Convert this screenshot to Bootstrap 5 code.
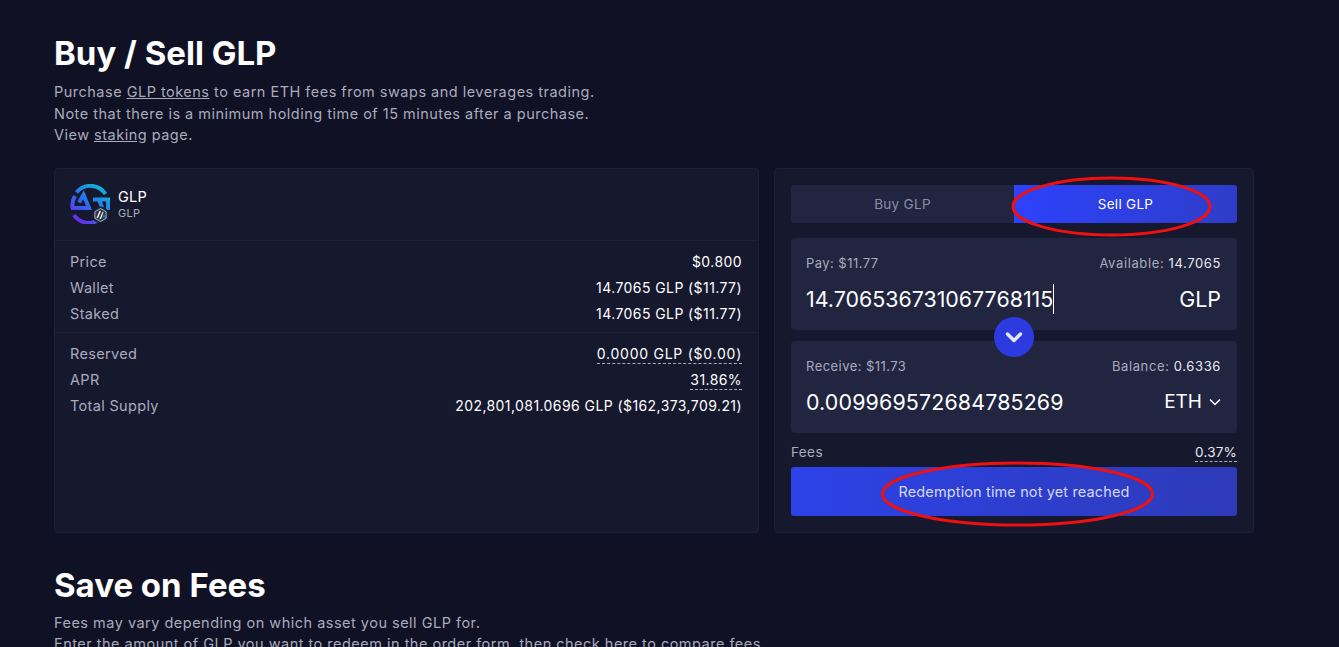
<!DOCTYPE html>
<html lang="en">
<head>
<meta charset="UTF-8" />
<title>Buy / Sell GLP</title>
<link rel="stylesheet" href="https://cdn.jsdelivr.net/npm/bootstrap@5.3.0/dist/css/bootstrap.min.css" />
<style>
html, body { height: 647px; overflow: hidden; }
body { background: #101124; color: #fff; font-family: Inter, "Liberation Sans", sans-serif; font-size: 15px; }
.glp-page { width: 1200px; margin-left: 54px; padding-top: 35px; }
.glp-title { font-size: 33px; font-weight: 700; line-height: 37px; margin: 0 0 9px; }
.glp-sub { font-size: 14.5px; line-height: 21.5px; letter-spacing: .49px; margin: 0; color: #a9abbd; }
.glp-sub a { color: #a9abbd; }
.glp-panels { display: grid; grid-template-columns: 705px 480px; gap: 15px; margin-top: 22px; height: 364px; }
.glp-panel { background: #16182e; border: 1px solid #1e2136; border-radius: 4px; }
.glp-head { height: 72px; padding: 16px 15px; border-bottom: 1px solid #1e2136; }
.glp-name { font-size: 14.5px; line-height: 18px; letter-spacing: .3px; }
.glp-sym { font-size: 11px; line-height: 14px; letter-spacing: .3px; color: #a9abbd; }
.glp-rows { padding: 8px 16px 5px 15px; }
.glp-rows + .glp-rows { padding-top: 8px; border-top: 1px solid #1e2136; }
.glp-row { height: 26px; line-height: 26px; font-size: 14px; letter-spacing: .42px; }
.glp-label { color: #a9abbd; font-size: 14.5px; letter-spacing: .33px; }
.glp-dash { border-bottom: 1px dashed #a9abbd; line-height: 18px; height: 19px; margin-top: 4px; align-self: flex-start; }
.glp-wide { letter-spacing: .75px; }
.glp-tabs { height: 38px; background: #212540; border-radius: 3px; overflow: hidden; font-size: 13.5px; letter-spacing: .3px; }
.glp-tab { flex: 1; color: #8b8da4; padding-top: 1px; }
.glp-tab-on { background: linear-gradient(90deg, #2d42fc, #2e3dc8); color: #fff; }
.glp-box { background: #212540; border-radius: 4px; height: 92px; padding: 16px 16px 15px 15px; }
.glp-box-first { margin-top: 15px; }
.glp-box-top { font-size: 13px; line-height: 18px; letter-spacing: .45px; color: #a9abbd; }
.glp-box-top span:last-child { letter-spacing: .62px; }
.glp-box-top b { font-weight: 400; color: #e8e9f0; }
.glp-box-val { font-size: 21.4px; line-height: 30px; margin-top: 12px; }
.glp-val-wide { letter-spacing: .15px; }
.glp-caret { border-right: 1px solid #fff; }
.glp-unit { font-size: 19px; gap: 7px; }
.glp-gap { height: 11px; }
.glp-swap { width: 40px; height: 40px; border-radius: 50%; background: #2b3be0; position: absolute; left: 203px; top: -13px; z-index: 2; }
.glp-fees { font-size: 13.5px; letter-spacing: .4px; color: #a9abbd; height: 20px; margin-top: 10px; }
.glp-fees span { line-height: 18px; }
.glp-fees .glp-dash { color: #e8e9f0; margin-top: 0; letter-spacing: .2px; }
.glp-btn { height: 49px; padding-top: 3px; background: linear-gradient(90deg, #2d42e8, #2d3bb8); border: 0; border-radius: 3px; color: #d5d8f5; font-size: 14.5px; letter-spacing: .13px; }
.glp-marks { position: absolute; left: -1px; top: -1px; width: 480px; height: 364px; pointer-events: none; z-index: 3; }
.glp-next { margin-top: 35px; }
.glp-next .glp-title { margin-bottom: 8px; }
</style>
</head>
<body>

<div class="glp-page">
    <h1 class="glp-title">Buy / Sell GLP</h1>
    <p class="glp-sub">Purchase <a href="#">GLP tokens</a> to earn ETH fees from swaps and leverages trading.<br />
    Note that there is a minimum holding time of 15 minutes after a purchase.<br />
    View <a href="#">staking</a> page.</p>

    <div class="glp-panels">
        <div class="glp-panel">
            <div class="glp-head d-flex align-items-center gap-2">
                <svg width="40" height="40" viewBox="0 0 40 40">
                    <defs>
                        <linearGradient id="glpGrad" gradientUnits="userSpaceOnUse" x1="34" y1="3" x2="8" y2="38">
                            <stop offset="0" stop-color="#0fb8d6" />
                            <stop offset="0.55" stop-color="#2a6cf0" />
                            <stop offset="1" stop-color="#6a2cf0" />
                        </linearGradient>
                    </defs>
                    <g fill="none" stroke="url(#glpGrad)" stroke-width="4">
                        <path d="M6.500 8.500A18 18 0 0 1 35.500 10" />
                        <path d="M4 31A18 18 0 0 0 27 37" />
                        <path d="M2.500 24A18 18 0 0 1 5 12" />
                        <path d="M1 24H19L13.500 11 9 18.500" />
                        <path d="M23 15.500H38V26M29 15.500L33 26" />
                    </g>
                    <circle cx="30.500" cy="31" r="8.500" fill="#1b2238" />
                    <path d="M30.500 24.500l5.600 3.200v6.600l-5.600 3.200-5.600-3.200v-6.600z" fill="#2c374b" stroke="#a8b4c4" stroke-width="1" />
                    <path d="M26.500 34l3-7h1.500l-3 7zM29.500 35l3-7h1l-2.500 7z" fill="#fff" />
                    <path d="M33 33l1-2.500 1 3z" fill="#28a0f0" />
                </svg>
                <div>
                    <div class="glp-name">GLP</div>
                    <div class="glp-sym">GLP</div>
                </div>
            </div>
            <div class="glp-rows">
                <div class="glp-row d-flex justify-content-between"><span class="glp-label">Price</span><span>$0.800</span></div>
                <div class="glp-row d-flex justify-content-between"><span class="glp-label">Wallet</span><span>14.7065 GLP ($11.77)</span></div>
                <div class="glp-row d-flex justify-content-between"><span class="glp-label">Staked</span><span>14.7065 GLP ($11.77)</span></div>
            </div>
            <div class="glp-rows">
                <div class="glp-row d-flex justify-content-between"><span class="glp-label">Reserved</span><span class="glp-dash glp-wide">0.0000 GLP ($0.00)</span></div>
                <div class="glp-row d-flex justify-content-between"><span class="glp-label">APR</span><span class="glp-dash">31.86%</span></div>
                <div class="glp-row d-flex justify-content-between"><span class="glp-label">Total Supply</span><span>202,801,081.0696 GLP ($162,373,709.21)</span></div>
            </div>
        </div>

        <div class="glp-panel position-relative p-3">
            <div class="glp-tabs d-flex">
                <div class="glp-tab d-flex align-items-center justify-content-center">Buy GLP</div>
                <div class="glp-tab glp-tab-on d-flex align-items-center justify-content-center">Sell GLP</div>
            </div>
            <div class="glp-box glp-box-first">
                <div class="glp-box-top d-flex justify-content-between"><span>Pay: $11.77</span><span>Available: <b>14.7065</b></span></div>
                <div class="glp-box-val d-flex justify-content-between"><span class="glp-caret">14.706536731067768115</span><span>GLP</span></div>
            </div>
            <div class="glp-gap position-relative">
                <div class="glp-swap d-flex align-items-center justify-content-center">
                    <svg width="18" height="12" viewBox="0 0 18 12"><path d="M2.500 3L9 9.500 15.500 3" fill="none" stroke="#e4e6f5" stroke-width="3.500" stroke-linecap="round" stroke-linejoin="round" /></svg>
                </div>
            </div>
            <div class="glp-box">
                <div class="glp-box-top d-flex justify-content-between"><span>Receive: $11.73</span><span>Balance: <b>0.6336</b></span></div>
                <div class="glp-box-val d-flex justify-content-between"><span class="glp-val-wide">0.009969572684785269</span>
                    <span class="glp-unit d-flex align-items-center">ETH<svg width="12" height="8" viewBox="0 0 12 8"><path d="M1 1.500l5 5 5-5" fill="none" stroke="#fff" stroke-width="1.500" /></svg></span></div>
            </div>
            <div class="glp-fees d-flex justify-content-between align-items-start"><span>Fees</span><span class="glp-dash">0.37%</span></div>
            <button class="glp-btn w-100 d-block mt-1">Redemption time not yet reached</button>
            <svg class="glp-marks" viewBox="0 0 480 364">
                <ellipse cx="337.500" cy="38.500" rx="98.500" ry="28.500" fill="none" stroke="#f01010" stroke-width="3" />
                <ellipse cx="243.500" cy="326" rx="135" ry="31" fill="none" stroke="#f01010" stroke-width="3" />
            </svg>
        </div>
    </div>

    <div class="glp-next">
        <h2 class="glp-title">Save on Fees</h2>
        <p class="glp-sub">Fees may vary depending on which asset you sell GLP for.<br />
        Enter the amount of GLP you want to redeem in the order form, then check here to compare fees.</p>
    </div>
</div>

</body>
</html>
